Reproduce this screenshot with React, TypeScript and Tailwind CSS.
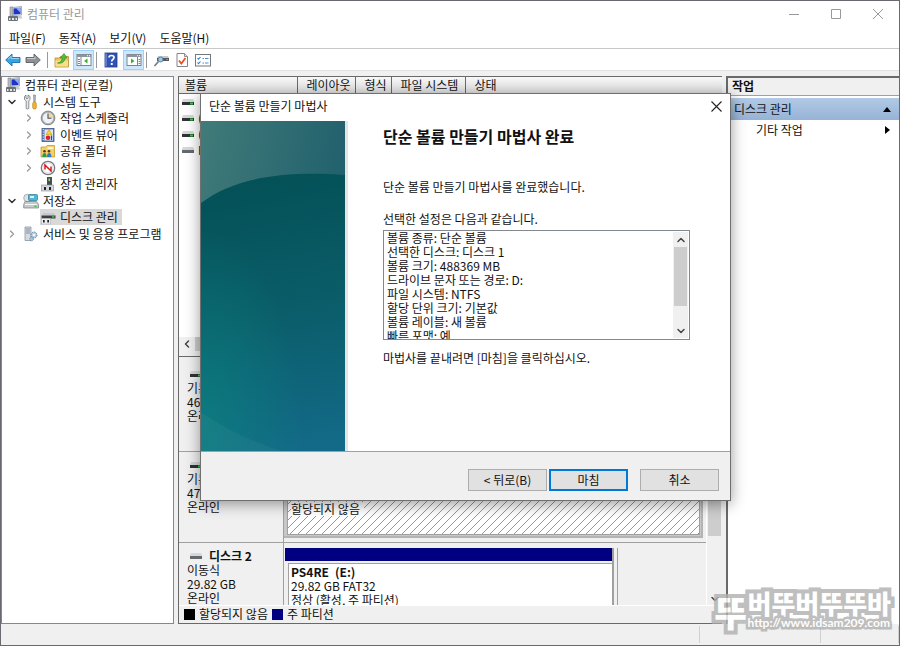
import type { ReactNode } from "react";
import { ChevronDown, ChevronLeft, ChevronRight, ChevronUp } from "lucide-react";

function ComputerIcon() {
  return (
    <svg viewBox="0 0 16 16" className="size-4 shrink-0">
      <path d="M3 1h3v10H3z" fill="#b9bcc0" stroke="#7c8086" strokeWidth=".6" />
      <path d="M5.500 1.500 14.500.5v8.500l-9 .5z" fill="#dfe4ea" stroke="#8b9199" strokeWidth=".7" />
      <path d="M6.500 2.500 13.500 1.700v6.300l-7 .5z" fill="#1d36c4" />
      <path d="M9 2.200 13.500 1.700v5z" fill="#8fa9f5" />
      <path d="M10 9.500h4l1.500 3h-5z" fill="#c9cdd2" />
      <rect x="1" y="10" width="10" height="5" rx="1" fill="#6b7178" />
      <path d="M2 12h1.500v2H2zM5 12h2v2H5zM8.500 12H10v2H8.500z" fill="#e8ebee" />
    </svg>
  );
}

function ToolsIcon() {
  return (
    <svg viewBox="0 0 16 16" className="size-4 shrink-0">
      <path d="M3 1v3l1 1 1-1V1l2 1.500v3L5.800 7v7.500L4.500 15l-1.300-.5V7L1.500 5.500v-3z" fill="#e9ebee" stroke="#6f757c" strokeWidth=".8" />
      <path d="M10.500 1h2l-.4 7h-1.200z" fill="#b3b8be" stroke="#777d84" strokeWidth=".6" />
      <rect x="9.700" y="8" width="3.600" height="7" rx="1.500" fill="#f4b32c" stroke="#b4780d" strokeWidth=".6" />
    </svg>
  );
}

function ClockIcon() {
  return (
    <svg viewBox="0 0 16 16" className="size-4 shrink-0">
      <circle cx="8" cy="8" r="6.900" fill="#a9adb3" stroke="#73777d" strokeWidth=".8" />
      <circle cx="8" cy="8" r="5.200" fill="#eef3f8" />
      <path d="M8 8V2.800A5.200 5.200 0 0 1 13.200 8z" fill="#f2d9a0" />
      <path d="M8 3.500V8.300h3.500" fill="none" stroke="#4b4f57" strokeWidth="1.100" />
    </svg>
  );
}

function EventIcon() {
  return (
    <svg viewBox="0 0 16 16" className="size-4 shrink-0">
      <rect x="2" y="1.500" width="12" height="13" fill="#5d7cb2" stroke="#42588a" strokeWidth=".8" />
      <rect x="4.500" y="2.500" width="8.500" height="11" fill="#dfe7f4" />
      <path d="M3.200 2v12" stroke="#fff" strokeDasharray="1 1.500" />
      <path d="m9 2.500 3 5H6z" fill="#ffd02f" stroke="#c58d00" strokeWidth=".5" />
      <circle cx="8" cy="10.800" r="2.300" fill="#d8232a" />
      <path d="M11.500 8.500v4.500" stroke="#2344b8" strokeWidth="1.300" />
    </svg>
  );
}

function SharedFolderIcon() {
  return (
    <svg viewBox="0 0 16 16" className="size-4 shrink-0">
      <path d="M1 4h5l1-1.500h7.500V14H1z" fill="#f6cf67" stroke="#c79a34" strokeWidth=".8" />
      <path d="M7.500 4h6v2h-6z" fill="#fff5cf" />
      <circle cx="4.500" cy="8.300" r="1.300" fill="#4b3a2a" />
      <circle cx="9" cy="8.300" r="1.300" fill="#4b3a2a" />
      <path d="M2.300 14c0-2.500 1-4 2.300-4s2 1.500 2 4z" fill="#2a9a50" />
      <path d="M7 14c0-2.500.8-4 2.200-4s2.200 1.500 2.200 4z" fill="#2b7fc4" />
    </svg>
  );
}

function PerformanceIcon() {
  return (
    <svg viewBox="0 0 16 16" className="size-4 shrink-0">
      <circle cx="8" cy="8" r="6.700" fill="#fff" stroke="#777b81" strokeWidth="1.300" />
      <circle cx="8" cy="8" r="5" fill="none" stroke="#c3c6ca" strokeWidth=".6" />
      <path d="M5 9.500V5l6 6V6.500" fill="none" stroke="#d71920" strokeWidth="1.500" />
    </svg>
  );
}

function DeviceIcon() {
  return (
    <svg viewBox="0 0 16 16" className="size-4 shrink-0">
      <path d="M7 1h5v9H7z" fill="#4a4e53" />
      <path d="M8.500 2.500h1.500V5H8.500z" fill="#7bea62" />
      <rect x="1.500" y="9" width="12" height="6" fill="#d3d6da" stroke="#8b8f95" strokeWidth=".6" />
      <path d="M4 11h2v3H4zM9 11h2v3H9z" fill="#222" />
    </svg>
  );
}

function StorageIcon() {
  return (
    <svg viewBox="0 0 16 16" className="size-4 shrink-0">
      <ellipse cx="4.500" cy="5" rx="3.800" ry="3.800" fill="#dfe3e8" stroke="#8f959c" strokeWidth=".7" />
      <rect x="5.500" y="1.500" width="9" height="6" rx="1" fill="#4bb7d9" stroke="#2a7892" strokeWidth=".7" />
      <path d="M7 3h4v2H7z" fill="#d6f3fb" />
      <path d="M2 8.500h11.500l2 3v3.500H.7v-3.500z" fill="#c5c9ce" stroke="#767b82" strokeWidth=".7" />
      <path d="M2 11.500h12" stroke="#f6f7f8" />
      <path d="M11.500 12.500h2v1.500h-2z" fill="#35c43d" />
    </svg>
  );
}

function DiskManagementIcon() {
  return (
    <svg viewBox="0 0 16 16" className="size-4 shrink-0">
      <path d="M3 4h11l1.500 2.500H1.500z" fill="#c7cacd" />
      <path d="M1.500 6.500h14v3h-14z" fill="#3c4044" />
      <path d="M12 7.300h2.300v1.200H12z" fill="#4be052" />
      <rect x="1.500" y="9.500" width="9" height="5.500" fill="#eceef0" stroke="#a5a9ae" strokeWidth=".5" />
      <path d="M3 11h1.700v2.500H3zM7.300 11H9v2.500H7.300z" fill="#222" />
    </svg>
  );
}

function ServicesIcon() {
  return (
    <svg viewBox="0 0 16 16" className="size-4 shrink-0">
      <path d="M2 1h6v13.500H2z" fill="#d4dae0" stroke="#7e8890" strokeWidth=".7" />
      <path d="M3 3h4M3 5h4M3 7h4" stroke="#6a7f95" strokeWidth=".8" />
      <circle cx="11" cy="9" r="3" fill="#b9cfe4" stroke="#5d7f9f" strokeDasharray="1.500 .8" />
      <circle cx="11" cy="9" r="1" fill="#fff" />
      <circle cx="8.500" cy="13" r="1.900" fill="#a9c4dc" stroke="#5d7f9f" strokeDasharray="1 .7" strokeWidth=".8" />
    </svg>
  );
}

function DriveIcon({ removable = false }: { removable?: boolean }) {
  return (
    <svg viewBox="0 0 14 8" className="h-2 w-[14px] shrink-0">
      <path d="M2 1h10l1.500 3H.5z" fill="#d5d8da" />
      <rect x="1" y="4" width="12" height="3" fill={removable ? "#66696c" : "#303234"} />
      {removable ? null : <rect x="9" y="4.500" width="3" height="2" fill="#27d63c" />}
    </svg>
  );
}

function ArrowIcon({ forward = false }: { forward?: boolean }) {
  return (
    <svg viewBox="0 0 16 16" className="size-4">
      <path
        d={forward ? "M15.300 8 9 2v3.500H1v5h8V14z" : "M.7 8 7 2v3.500h8v5H7V14z"}
        fill={forward ? "#8f9295" : "#33a7e6"}
        stroke={forward ? "#5d6063" : "#1c6fa8"}
        strokeWidth=".9"
        strokeLinejoin="round"
      />
      <path d={forward ? "M2 6.500h8V4.500" : "M3 7.200 6.200 4.200v2.300H14"} fill="none" stroke="#fff" strokeOpacity=".5" />
    </svg>
  );
}

function UpFolderIcon() {
  return (
    <svg viewBox="0 0 16 16" className="size-4">
      <path d="M1 6h4l1.500-1.500H14.500V15H1z" fill="#ecc45b" stroke="#b98e30" strokeWidth=".8" />
      <path d="M1.500 8.500h12.500V14.500H1.500z" fill="#f8de8c" />
      <path d="M3.500 11C7 10.500 8 8.500 8.200 6H6l4-4.500L13 6h-2c0 3.500-3 6-7.500 5z" fill="#4fbf3a" stroke="#2c8421" strokeWidth=".6" />
    </svg>
  );
}

function PaneIcon({ right = false }: { right?: boolean }) {
  return (
    <svg viewBox="0 0 16 16" className="size-4">
      <rect x="1" y="2.500" width="14" height="11" fill="#fff" stroke="#7f858c" />
      <path d="M1 2.500h14v2.500H1z" fill="#8d949c" />
      <path d="M11 3.700h1M13 3.700h1" stroke="#fff" />
      <path d={right ? "M11.500 5v8.500M12.500 7.500h2M12.500 9.500h2M12.500 11.500h2" : "M5 5v8.500M2 7.500h2M2 9.500h2M2 11.500h2"} stroke="#7f858c" />
      <path d={right ? "M5 6.500v5L8.500 9z" : "M11.500 6.500v5L8 9z"} fill="#36b32a" />
    </svg>
  );
}

function HelpIcon() {
  return (
    <svg viewBox="0 0 16 16" className="size-4">
      <rect x="2" y="1" width="12" height="14" fill="#3054b4" stroke="#1e3787" strokeWidth=".8" />
      <path d="M3 1.500v13" stroke="#91a9e2" />
      <path d="M6 5.500C6 2.800 11 2.800 11 5.500c0 1.800-2.300 1.900-2.300 4" fill="none" stroke="#fff" strokeWidth="1.700" />
      <rect x="7.800" y="11" width="1.900" height="2" fill="#fff" />
    </svg>
  );
}

function ConnectIcon() {
  return (
    <svg viewBox="0 0 16 16" className="size-4">
      <path d="M5 4h10l1 2H4z" fill="#c4c8cc" />
      <path d="M4 6h12v3H4z" fill="#55595e" />
      <circle cx="7.500" cy="7.500" r="2.500" fill="#9cc9ea" stroke="#48708d" strokeWidth=".8" />
      <path d="M5.500 9.500 1.500 14" stroke="#7a7e83" strokeWidth="1.800" />
      <path d="M13 7h2v1h-2z" fill="#36cc46" />
    </svg>
  );
}

function CheckDocumentIcon() {
  return (
    <svg viewBox="0 0 16 16" className="size-4">
      <path d="M3 1.500h7.500L13.500 4.500v10H3z" fill="#fff" stroke="#777" strokeWidth=".9" />
      <path d="M10.500 1.500v3h3" fill="#ddd" stroke="#777" strokeWidth=".8" />
      <path d="m5 8.500 2.300 3L11.500 6" fill="none" stroke="#e84b1c" strokeWidth="1.700" />
    </svg>
  );
}

function CheckListIcon() {
  return (
    <svg viewBox="0 0 16 16" className="size-4">
      <rect x=".5" y="2.500" width="15" height="11.500" fill="#fff" stroke="#777" />
      <path d="m2.500 6 1 1.200L5.500 5M2.500 10.500l1 1.200 2-2.200" fill="none" stroke="#2a7fd0" strokeWidth="1.100" />
      <path d="M7.500 6.500H9M10 6.500h3.500M7.500 11H9M10 11h3.500" stroke="#4a90c8" />
    </svg>
  );
}

type TreeItem = {
  label: string;
  icon: ReactNode;
  level: number;
  state?: "open" | "closed";
  selected?: boolean;
};

const treeItems: TreeItem[] = [
  { label: "컴퓨터 관리(로컬)", icon: <ComputerIcon />, level: 0 },
  { label: "시스템 도구", icon: <ToolsIcon />, level: 1, state: "open" },
  { label: "작업 스케줄러", icon: <ClockIcon />, level: 2, state: "closed" },
  { label: "이벤트 뷰어", icon: <EventIcon />, level: 2, state: "closed" },
  { label: "공유 폴더", icon: <SharedFolderIcon />, level: 2, state: "closed" },
  { label: "성능", icon: <PerformanceIcon />, level: 2, state: "closed" },
  { label: "장치 관리자", icon: <DeviceIcon />, level: 2 },
  { label: "저장소", icon: <StorageIcon />, level: 1, state: "open" },
  { label: "디스크 관리", icon: <DiskManagementIcon />, level: 2, selected: true },
  { label: "서비스 및 응용 프로그램", icon: <ServicesIcon />, level: 1, state: "closed" }
];

const indents = ["pl-[3px]", "pl-[4px]", "pl-[21px]"];

const volumes = [
  { name: "", removable: false },
  { name: "(C:)", removable: false },
  { name: "(D:)", removable: false },
  { name: "PS4RE (E:)", removable: true }
];

const summary = [
  "볼륨 종류: 단순 볼륨",
  "선택한 디스크: 디스크 1",
  "볼륨 크기: 488369 MB",
  "드라이브 문자 또는 경로: D:",
  "파일 시스템: NTFS",
  "할당 단위 크기: 기본값",
  "볼륨 레이블: 새 볼륨",
  "빠른 포맷: 예"
].join("\n");

function Tree() {
  return (
    <nav className="w-[173px] shrink-0 border border-[#828790] bg-white">
      <ul className="grid h-[165px] grid-rows-10">
        {treeItems.map((item) => (
          <li key={item.label} className={`flex min-h-0 items-center ${indents[item.level]}`}>
            {item.level > 0 ? (
              <span className="flex w-[17px] shrink-0 items-center">
                {item.state === "open" ? <ChevronDown className="size-3 text-[#333]" strokeWidth={3} /> : null}
                {item.state === "closed" ? <ChevronRight className="size-3 text-[#999]" strokeWidth={2.5} /> : null}
              </span>
            ) : null}
            <a
              href="#"
              className={`flex h-4 items-center gap-1 whitespace-nowrap leading-4 ${item.selected ? "bg-[#d9d9d9] pr-1" : ""}`}
            >
              {item.icon}
              {item.label}
            </a>
          </li>
        ))}
      </ul>
    </nav>
  );
}

function VolumeList() {
  const th = "border-r border-[#696969] text-left font-normal leading-4";

  return (
    <div className="flex h-[274px] shrink-0 flex-col bg-white">
      <table className="w-full table-fixed border-collapse">
        <thead className="border-b border-[#696969] bg-linear-to-b from-[#f7f7f7] to-[#e0e0e0]">
          <tr className="h-4">
            <th className={`w-[118px] pl-[6px] ${th}`}>볼륨</th>
            <th className={`w-[58px] pl-[9px] ${th}`}>레이아웃</th>
            <th className={`w-[36px] pl-[9px] ${th}`}>형식</th>
            <th className={`w-[74px] pl-[9px] ${th}`}>파일 시스템</th>
            <th className="pl-[9px] text-left font-normal leading-4">상태</th>
          </tr>
        </thead>
        <tbody>
          {volumes.map((volume, index) => (
            <tr key={index} className="h-4">
              <td colSpan={5} className="pl-[2px]">
                <span className="flex items-center gap-[3px] leading-4">
                  <DriveIcon removable={volume.removable} />
                  {volume.name}
                </span>
              </td>
            </tr>
          ))}
        </tbody>
      </table>
      <div className="mt-auto flex h-[14px] items-center bg-[#f0f0f0]">
        <button type="button" aria-label="왼쪽으로 스크롤" className="flex w-4 justify-center">
          <ChevronLeft className="size-3 text-[#444]" strokeWidth={3} />
        </button>
        <span className="h-full w-3/5 bg-[#cdcdcd]" />
      </div>
    </div>
  );
}

function DiskLabel({ name, kind, size, removable = false }: { name: string; kind: string; size: string; removable?: boolean }) {
  return (
    <div className="w-[105px] shrink-0 border-r border-[#a0a0a0] pt-[6px] pl-2 leading-[14px]">
      <p className="flex items-center gap-[6px] pl-[2px] font-bold">
        <DriveIcon removable={removable} />
        {name}
      </p>
      <p>{kind}</p>
      <p>{size}</p>
      <p>온라인</p>
    </div>
  );
}

function Hatch() {
  return (
    <svg className="absolute inset-0 size-full">
      <defs>
        <pattern id="hatch" width="8" height="8" patternUnits="userSpaceOnUse">
          <path d="M-1 9 9-1M-1 1 1-1M7 9 9 7" stroke="#8c8c8c" strokeWidth=".9" />
        </pattern>
      </defs>
      <rect width="100%" height="100%" fill="url(#hatch)" />
    </svg>
  );
}

function DiskGraph() {
  return (
    <div className="flex min-h-0 flex-1 flex-col border-t border-[#696969]">
      <div className="flex min-h-0 flex-1 overflow-hidden">
        <div className="flex h-0 min-h-full flex-1 flex-col overflow-hidden pt-1">
          <div className="flex h-[91px] shrink-0 border-b border-[#a0a0a0]">
            <DiskLabel name="디스크 0" kind="기본" size="465.76 GB" />
          </div>
          <div className="flex h-[91px] shrink-0 border-b border-[#a0a0a0]">
            <DiskLabel name="디스크 1" kind="기본" size="476.94 GB" />
            <div className="mt-[5px] mr-[3px] mb-1 flex flex-1 flex-col border-r-2 border-b-2 border-[#b4b4b4] bg-[#c8c8c8] pr-[1px] pb-[1px] pl-[3px]">
              <div className="h-[14px] bg-black" />
              <div className="relative flex-1 border border-[#a0a0a0] bg-white leading-[14px]">
                <Hatch />
                <p className="relative mt-[30px] ml-[3px] w-fit bg-white pr-1">할당되지 않음</p>
              </div>
            </div>
          </div>
          <div className="flex h-[91px] shrink-0">
            <DiskLabel name="디스크 2" kind="이동식" size="29.82 GB" removable />
            <div className="mt-[3px] flex-1 pt-[2px] pl-[1px]">
              <div className="h-full w-[79%] border-r border-[#a0a0a0] pr-[3px]">
                <div className="flex h-full flex-col border-r-2 border-[#a0a0a0]">
                  <div className="h-[13px] bg-[#000080]" />
                  <div className="mt-[2px] ml-[3px] flex-1 border-t border-l border-[#a0a0a0] bg-white pt-[1px] pl-[2px] leading-[14px] whitespace-nowrap">
                    <p className="flex gap-[6px] font-bold">
                      <span>PS4RE</span>
                      <span>(E:)</span>
                    </p>
                    <p>29.82 GB FAT32</p>
                    <p>정상 (활성, 주 파티션)</p>
                  </div>
                </div>
              </div>
            </div>
          </div>
        </div>
        <div className="flex w-4 shrink-0 flex-col items-center border-l border-white bg-[#f0f0f0]">
          <span className="h-[179px] w-[13px] bg-[#cdcdcd]" />
          <button type="button" aria-label="아래로 스크롤" className="mt-auto">
            <ChevronDown className="size-3 text-[#444]" strokeWidth={3} />
          </button>
        </div>
      </div>
      <div className="flex h-[18px] shrink-0 items-center border-t border-white pb-[1px] pl-[5px] leading-4">
        <span className="mr-1 size-[11px] bg-black" />
        할당되지 않음
        <span className="mr-1 ml-1 size-[11px] bg-[#000080]" />
        주 파티션
      </div>
    </div>
  );
}

function Actions() {
  return (
    <aside className="w-[173px] shrink-0 border-t-2 border-l-2 border-[#696969] bg-white">
      <h2 className="h-[18px] border-b border-[#a0a0a0] bg-[#f0f0f0] pl-1 leading-4 font-bold">작업</h2>
      <button
        type="button"
        className="mt-[2px] flex h-[22px] w-full items-center justify-between bg-linear-to-b from-[#b1c9e5] to-[#96b3d6] pr-2 pl-[6px] leading-5"
      >
        디스크 관리
        <svg viewBox="0 0 8 5" className="h-[5px] w-2">
          <path d="M4 0 8 5H0z" />
        </svg>
      </button>
      <button type="button" className="flex h-5 w-full items-center justify-between pr-[9px] pl-7">
        기타 작업
        <svg viewBox="0 0 5 8" className="h-2 w-[5px]">
          <path d="M0 0 5 4 0 8z" />
        </svg>
      </button>
    </aside>
  );
}

function WizardBanner() {
  return (
    <svg viewBox="0 0 144 330" preserveAspectRatio="none" className="h-[330px] w-36 shrink-0">
      <defs>
        <linearGradient id="sky" x1="0" y1="0" x2="1" y2=".5">
          <stop offset="0" stopColor="#417b79" />
          <stop offset="1" stopColor="#1c5c6b" />
        </linearGradient>
        <linearGradient id="hill" x1=".5" y1="0" x2=".6" y2="1">
          <stop offset="0" stopColor="#045157" />
          <stop offset=".5" stopColor="#0a5d69" />
          <stop offset="1" stopColor="#136a88" />
        </linearGradient>
        <radialGradient id="glow" cx="0" cy=".9" r=".7">
          <stop offset="0" stopColor="#0b8580" stopOpacity=".65" />
          <stop offset="1" stopColor="#0b8580" stopOpacity="0" />
        </radialGradient>
      </defs>
      <rect width="144" height="330" fill="url(#sky)" />
      <path d="M0 82C34 56 84 50 144 54v276H0z" fill="url(#hill)" />
      <path d="M0 82C34 56 84 50 144 54v276H0z" fill="url(#glow)" />
      <path d="M0 291c20 14 44 27 80 39H0z" fill="#fff" fillOpacity=".04" />
    </svg>
  );
}

function Wizard() {
  const button = "h-[22px] w-[79px] border-[#adadad] bg-[#e1e1e1] leading-4";

  return (
    <section
      role="dialog"
      aria-label="단순 볼륨 만들기 마법사"
      className="absolute top-[92px] left-[199px] w-[531px] border border-[#707070] bg-white shadow-[0_3px_14px_rgba(0,0,0,0.4)]"
    >
      <header className="flex h-[27px] items-start justify-between px-2 pt-1">
        <h1 className="leading-4">단순 볼륨 만들기 마법사</h1>
        <button type="button" aria-label="닫기" className="mt-[3px]">
          <svg viewBox="0 0 11 11" className="size-[11px]">
            <path d="m.5.5 10 10m0-10-10 10" stroke="#222" strokeWidth="1.100" />
          </svg>
        </button>
      </header>
      <div className="flex h-[330px]">
        <WizardBanner />
        <div className="w-[3px] shrink-0 bg-[#e4e4e6]" />
        <div className="flex-1 pr-10 pl-[35px]">
          <h2 className="mt-[3px] text-base leading-6 font-bold">단순 볼륨 만들기 마법사 완료</h2>
          <p className="mt-[31px] leading-4">단순 볼륨 만들기 마법사를 완료했습니다.</p>
          <label htmlFor="summary" className="mt-4 block leading-4">
            선택한 설정은 다음과 같습니다.
          </label>
          <div className="mt-[3px] flex h-[110px] border border-[#828790]">
            <textarea
              id="summary"
              readOnly
              value={summary}
              className="h-full flex-1 resize-none overflow-hidden pl-[3px] leading-[14px] outline-none"
            />
            <div className="my-[1px] mr-[1px] flex w-[15px] flex-col items-center bg-[#f0f0f0]">
              <button type="button" aria-label="위로" className="flex h-[15px] items-center">
                <ChevronUp className="size-3 text-[#444]" strokeWidth={3} />
              </button>
              <span className="h-[59px] w-[13px] bg-[#cdcdcd]" />
              <button type="button" aria-label="아래로" className="mt-auto flex h-[15px] items-center">
                <ChevronDown className="size-3 text-[#444]" strokeWidth={3} />
              </button>
            </div>
          </div>
          <p className="mt-[10px] leading-4">마법사를 끝내려면 [마침]을 클릭하십시오.</p>
        </div>
      </div>
      <footer className="flex h-[49px] justify-end border-t border-[#a0a0a0] bg-[#f0f0f0] pt-[17px] pr-[11px]">
        <button type="button" className={`border ${button}`}>
          &lt; 뒤로(B)
        </button>
        <button type="button" className="ml-[2px] h-[22px] w-[79px] border-2 border-[#0078d7] bg-[#e1e1e1] leading-4">
          마침
        </button>
        <button type="button" className={`ml-3 border ${button}`}>
          취소
        </button>
      </footer>
    </section>
  );
}

function Watermark() {
  return (
    <div className="absolute right-[8px] bottom-[14px] flex items-center font-black text-white opacity-80 [-webkit-text-stroke:8px_#b0b0b0] [paint-order:stroke_fill]">
      <span className="text-[36px] leading-10">뚜</span>
      <div className="flex flex-col">
        <span className="text-[26px] leading-6">버뚜버뚜뚜바</span>
        <span className="font-[Lato] text-xs leading-4 font-bold [-webkit-text-stroke:5px_#b0b0b0]">http://www.idsam209.com</span>
      </div>
    </div>
  );
}

export default function App() {
  return (
    <div className="relative flex min-h-screen flex-col border border-[#6b6870] bg-[#f0f0f0] font-['Noto_Sans_CJK_KR',sans-serif] text-xs text-[#111]">
      <header className="flex h-[26px] items-center bg-white pr-4 pl-[6px] text-[#999]">
        <ComputerIcon />
        <span className="ml-1 leading-4">컴퓨터 관리</span>
        <div className="ml-auto flex items-center gap-8">
          <button type="button" aria-label="최소화">
            <svg viewBox="0 0 10 10" className="size-[10px]">
              <path d="M0 5.500h10" stroke="#999" />
            </svg>
          </button>
          <button type="button" aria-label="최대화">
            <svg viewBox="0 0 10 10" className="size-[10px]">
              <path d="M.5.5h9v9h-9z" fill="none" stroke="#999" />
            </svg>
          </button>
          <button type="button" aria-label="닫기">
            <svg viewBox="0 0 10 10" className="size-[10px]">
              <path d="m0 0 10 10M10 0 0 10" stroke="#999" />
            </svg>
          </button>
        </div>
      </header>
      <nav className="flex h-[22px] items-center gap-[13px] border-b border-[#c8c8c8] bg-white pl-2 leading-4">
        <button type="button">파일(F)</button>
        <button type="button">동작(A)</button>
        <button type="button">보기(V)</button>
        <button type="button">도움말(H)</button>
      </nav>
      <div className="flex h-[22px] items-center border-b border-[#e2e2e2] bg-white pl-1">
        <button type="button" aria-label="뒤로"><ArrowIcon /></button>
        <button type="button" aria-label="앞으로" className="ml-1"><ArrowIcon forward /></button>
        <span className="ml-[6px] h-4 w-[1px] bg-[#999]" />
        <button type="button" aria-label="위로" className="ml-[6px]"><UpFolderIcon /></button>
        <button type="button" aria-label="콘솔 트리" className="ml-[3px] flex h-5 w-[21px] items-center justify-center border border-[#99d1ff] bg-[#cce8ff]">
          <PaneIcon />
        </button>
        <span className="ml-[2px] h-4 w-[1px] bg-[#999]" />
        <button type="button" aria-label="도움말" className="ml-[6px]"><HelpIcon /></button>
        <button type="button" aria-label="작업 창" className="ml-1 flex h-5 w-[21px] items-center justify-center border border-[#99d1ff] bg-[#cce8ff]">
          <PaneIcon right />
        </button>
        <span className="ml-[2px] h-4 w-[1px] bg-[#999]" />
        <button type="button" aria-label="연결" className="ml-[6px]"><ConnectIcon /></button>
        <button type="button" aria-label="속성" className="ml-[5px]"><CheckDocumentIcon /></button>
        <button type="button" aria-label="목록" className="ml-[5px]"><CheckListIcon /></button>
      </div>
      <main className="flex flex-1 gap-1 pt-[5px]">
        <Tree />
        <section className="flex min-w-0 flex-1 flex-col border-t border-b border-l border-[#696969]">
          <VolumeList />
          <div className="h-[5px] shrink-0" />
          <DiskGraph />
        </section>
        <Actions />
      </main>
      <footer className="flex h-[21px] shrink-0 justify-end">
        <span className="my-[2px] w-[121px] border-l border-[#d0d0d0]" />
        <span className="my-[2px] w-[79px] border-x border-[#d0d0d0]" />
      </footer>
      <Wizard />
      <Watermark />
    </div>
  );
}
